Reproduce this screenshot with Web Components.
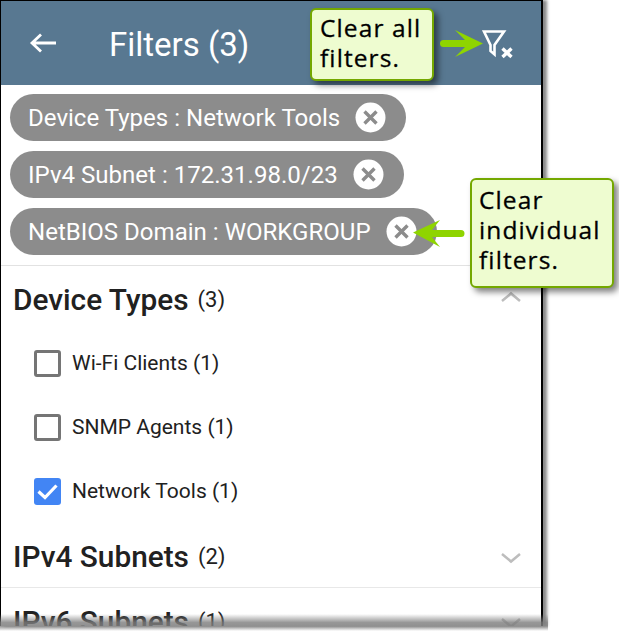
<!DOCTYPE html>
<html lang="en">
<head>
<meta charset="utf-8">
<title>Filters</title>
<style>
html,body{margin:0;padding:0;background:#fff;}
body{width:619px;height:640px;overflow:hidden;font-family:Roboto,sans-serif;position:relative;}
</style>
</head>
<body>
<filter-screen>
  <app-bar title="Filters (3)"></app-bar>
  <chip-list>
    <filter-chip>Device Types : Network Tools</filter-chip>
    <filter-chip>IPv4 Subnet : 172.31.98.0/23</filter-chip>
    <filter-chip>NetBIOS Domain : WORKGROUP</filter-chip>
  </chip-list>
  <filter-section name="Device Types" count="3" open>
    <check-row>Wi-Fi Clients (1)</check-row>
    <check-row>SNMP Agents (1)</check-row>
    <check-row checked>Network Tools (1)</check-row>
  </filter-section>
  <filter-section name="IPv4 Subnets" count="2" ruled></filter-section>
  <filter-section name="IPv6 Subnets" count="1"></filter-section>
</filter-screen>
<torn-edge></torn-edge>
<call-out style="left:310px;top:8px;width:124px;height:73px;padding-top:3px">Clear all<br>filters.</call-out>
<call-out style="left:470px;top:178px;width:144px;height:110px;padding-left:7px">Clear<br>individual<br>filters.</call-out>
<svg id="arrows" width="619" height="300" viewBox="0 0 619 300" style="position:absolute;left:0;top:0;pointer-events:none" aria-hidden="true">
  <g fill="#8fd400" stroke="none">
    <path d="M443.500 40 H465 L455 30 L483 43.500 L455 57 L465 47 H443.500 A3.500 3.500 0 0 1 443.500 40 Z"/>
    <path d="M461 230 H432 L440 220 L413 232.500 L440 247 L432 237 H461 A3.500 3.500 0 0 0 461 230 Z"/>
  </g>
</svg>
<script>
function def(name, css, html){
  customElements.define(name, class extends HTMLElement{
    constructor(){
      super();
      const r=this.attachShadow({mode:'open'});
      const a=n=>this.getAttribute(n)||'';
      r.innerHTML='<style>'+css+'</style>'+(typeof html==='function'?html(a,this):html);
    }
  });
}
def('filter-screen',
 `:host{display:block;width:540px;height:626px;border-left:1.500px solid #000;border-right:2px solid #000;background:#fff;overflow:hidden;box-shadow:4px 0 3px #8a8a8a;}
  :host::before{content:"";display:block;height:1px;background:#000;}`,
 `<slot></slot>`);
def('app-bar',
 `:host{display:flex;align-items:center;height:84px;background:#587891;color:#fff;font:400 33px/1 Roboto,sans-serif;position:relative;}
  .back{margin-left:28px;width:28px;height:24px;flex:none;}
  h1{font:inherit;margin:0 0 0 52px;padding-top:3px;}
  .clear{position:absolute;left:477px;top:27px;width:36px;height:32px;}`,
 (a)=>`<svg class="back" viewBox="0 0 28 24"><path d="M27 12H3M12 3.500L3 12l9 8.500" fill="none" stroke="#fff" stroke-width="2.800"/></svg>
 <h1>${a('title')}</h1>
 <svg class="clear" viewBox="0 0 36 32"><path d="M6 3.500H26L16.500 17V26.500L12.500 23V17Z" fill="none" stroke="#fff" stroke-width="2.600"/><path d="M24.500 20.500L33.500 29M33.500 20.500L24.500 29" stroke="#fff" stroke-width="3.400"/></svg>`);
def('chip-list',
 `:host{display:flex;flex-direction:column;align-items:flex-start;gap:10px;padding:9px 0 10px 9px;border-bottom:1px solid #e2e2e2;}`,
 `<slot></slot>`);
def('filter-chip',
 `:host{display:inline-flex;align-items:center;height:47px;border-radius:24px;background:#8c8c8c;color:#fff;font:400 24.050px/1 Roboto,sans-serif;padding:2px 20px 0 18px;box-sizing:border-box;white-space:nowrap;}
  svg{margin:-2px 0 0 15px;width:31px;height:31px;flex:none;}`,
 `<slot></slot><svg viewBox="0 0 31 31"><circle cx="15.500" cy="15.500" r="15" fill="#fff"/><path d="M9.500 9.500L21.500 21.500M21.500 9.500L9.500 21.500" stroke="#8c8c8c" stroke-width="3.400"/></svg>`);
def('filter-section',
 `:host{display:block;position:relative;}
  :host([ruled]){border-bottom:1px solid #e8e8e8;}
  .head{display:flex;align-items:center;padding-left:12px;height:64px;box-sizing:border-box;padding-top:3px;color:#212121;}
  :host([open]) .head{height:65px;}
  b{font:500 29.800px/34px Roboto,sans-serif;}
  span{font:400 22px/34px Roboto,sans-serif;margin-left:9px;}
  svg{position:absolute;right:20px;top:29px;width:20px;height:12px;}
  :host([open]) svg{transform:scaleY(-1);top:25px;}`,
 (a)=>`<div class="head"><b>${a('name')}</b><span>(${a('count')})</span></div>
 <svg viewBox="0 0 20 12"><path d="M1 2L10 9.500L19 2" fill="none" stroke="#bdbdbd" stroke-width="2.500"/></svg>
 <div><slot></slot></div>`);
def('check-row',
 `:host{display:flex;align-items:center;height:64px;padding-left:33px;color:#212121;font:400 21px/1 Roboto,sans-serif;}
  .box{width:27px;height:27px;box-sizing:border-box;border:3px solid #757575;border-radius:3px;margin-right:11px;flex:none;background:#fff;}
  svg{display:none;width:27px;height:27px;margin-right:11px;flex:none;}
  :host([checked]) .box{display:none;}
  :host([checked]) svg{display:block;}`,
 `<div class="box"></div><svg viewBox="0 0 27 27"><rect width="27" height="27" rx="3" fill="#4285f4"/><path d="M4.500 13.500L11 19.500L22.500 7.500" fill="none" stroke="#fff" stroke-width="3.200"/></svg><slot></slot>`);
def('call-out',
 `:host{display:block;position:absolute;box-sizing:border-box;background:#eefcd0;border:2px solid #74a800;border-radius:6px;box-shadow:4px 4px 6px rgba(0,0,0,.5);color:#000;font:500 24.500px/30px "Open Sans",sans-serif;letter-spacing:1.100px;padding:5px 8px;-webkit-text-stroke:.3px #000;white-space:nowrap;}`,
 `<slot></slot>`);
def('torn-edge',
 `:host{display:block;position:absolute;left:0;top:614px;width:548px;height:17px;background:linear-gradient(to bottom,rgba(255,255,255,0) 0,rgba(125,125,125,.8) 50%,rgba(125,125,125,.85) 70%,rgba(255,255,255,0) 100%);}`,
 ``);
</script>
</body>
</html>
